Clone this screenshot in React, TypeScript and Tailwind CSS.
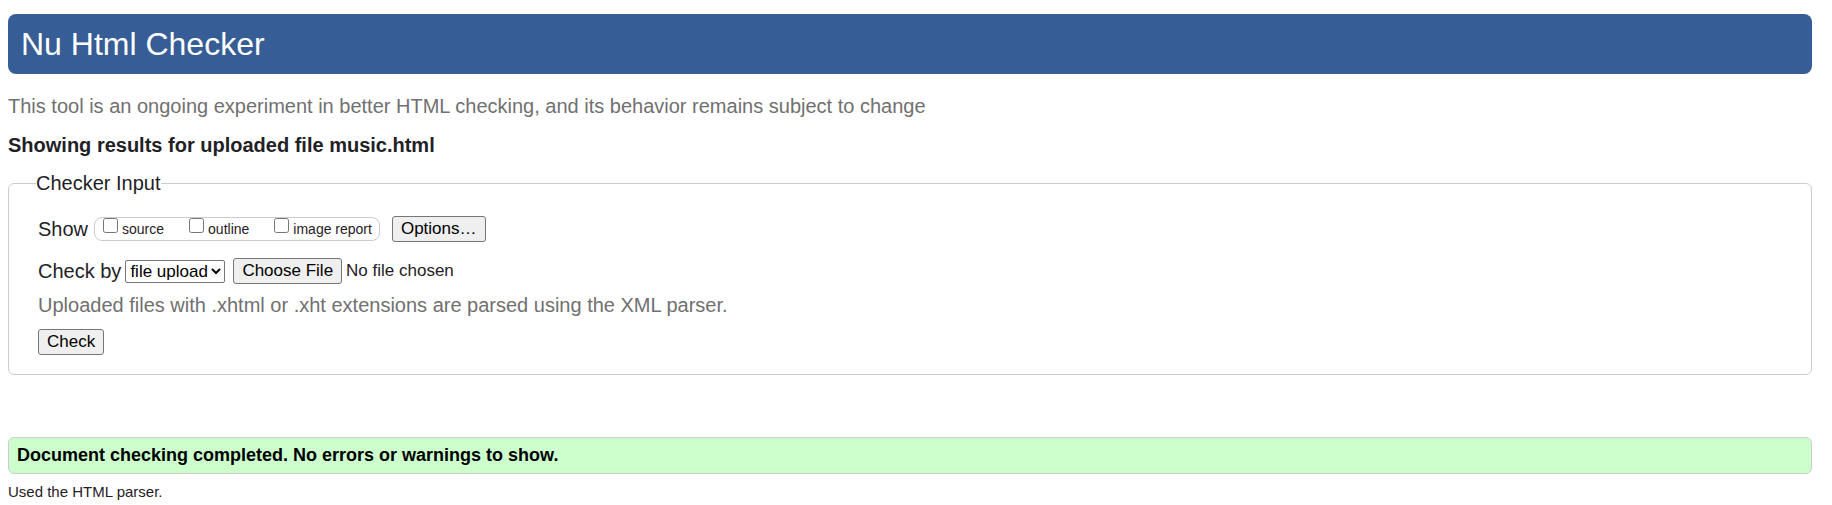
const buttonClass =
  'h-[26px] rounded-[3px] border border-[#767676] bg-[#efefef] px-2 text-[17px] leading-6 text-black';

const views = ['source', 'outline', 'image report'];

export default function App() {
  return (
    <div className="bg-white pt-[14px] pr-5 pl-2 font-['Liberation_Sans',Arial,sans-serif] text-xl leading-[30px] text-[#1f2126]">
      <h1 className="rounded-lg bg-[#365d95] px-[13px] py-[10px] text-[32px] leading-10 font-normal text-white">
        Nu Html Checker
      </h1>
      <p className="mt-[17px] text-[#707070]">
        This tool is an ongoing experiment in better HTML checking, and its behavior remains subject to change
      </p>
      <h2 className="mt-[9px] text-xl leading-[30px] font-bold">Showing results for uploaded file music.html</h2>

      <form onSubmit={(event) => event.preventDefault()}>
        <fieldset className="mt-2 rounded-md border border-[#cccccc] pr-4 pb-[19px] pl-[29px]">
          <legend className="-ml-[2px]">Checker Input</legend>
          <div className="mt-4 flex items-center">
            <span>Show</span>
            <div className="ml-[6px] flex h-6 items-center gap-[25px] rounded-lg border border-[#cccccc] pr-[7px] pl-2 text-sm">
              {views.map((view) => (
                <label key={view} className="flex items-center gap-1">
                  <input type="checkbox" className="mb-[7px] size-[15px]" />
                  {view}
                </label>
              ))}
            </div>
            <button type="button" className={`ml-3 ${buttonClass}`}>
              Options…
            </button>
          </div>
          <div className="mt-3 flex items-center">
            <label htmlFor="method">Check by</label>
            <select
              id="method"
              className="ml-1 h-[23px] rounded-[2px] border border-[#767676] bg-white text-[17px] leading-5 text-black"
            >
              <option>file upload</option>
              <option>address</option>
              <option>text input</option>
            </select>
            <input
              type="file"
              aria-label="File to check"
              className="ml-2 text-[17px] leading-6 file:mr-1 file:h-[26px] file:rounded-[3px] file:border file:border-solid file:border-[#767676] file:bg-[#efefef] file:px-2 file:text-black"
            />
          </div>
          <p className="mt-1 text-[#707070]">
            Uploaded files with .xhtml or .xht extensions are parsed using the XML parser.
          </p>
          <button type="submit" className={`mt-[9px] block ${buttonClass}`}>
            Check
          </button>
        </fieldset>
      </form>

      <p className="mt-[62px] rounded-md border border-[#cccccc] bg-[#ccffcc] px-2 py-[5px] text-lg leading-[25px] font-bold text-black">
        Document checking completed. No errors or warnings to show.
      </p>
      <p className="mt-2 text-[15px] leading-5">Used the HTML parser.</p>
    </div>
  );
}
